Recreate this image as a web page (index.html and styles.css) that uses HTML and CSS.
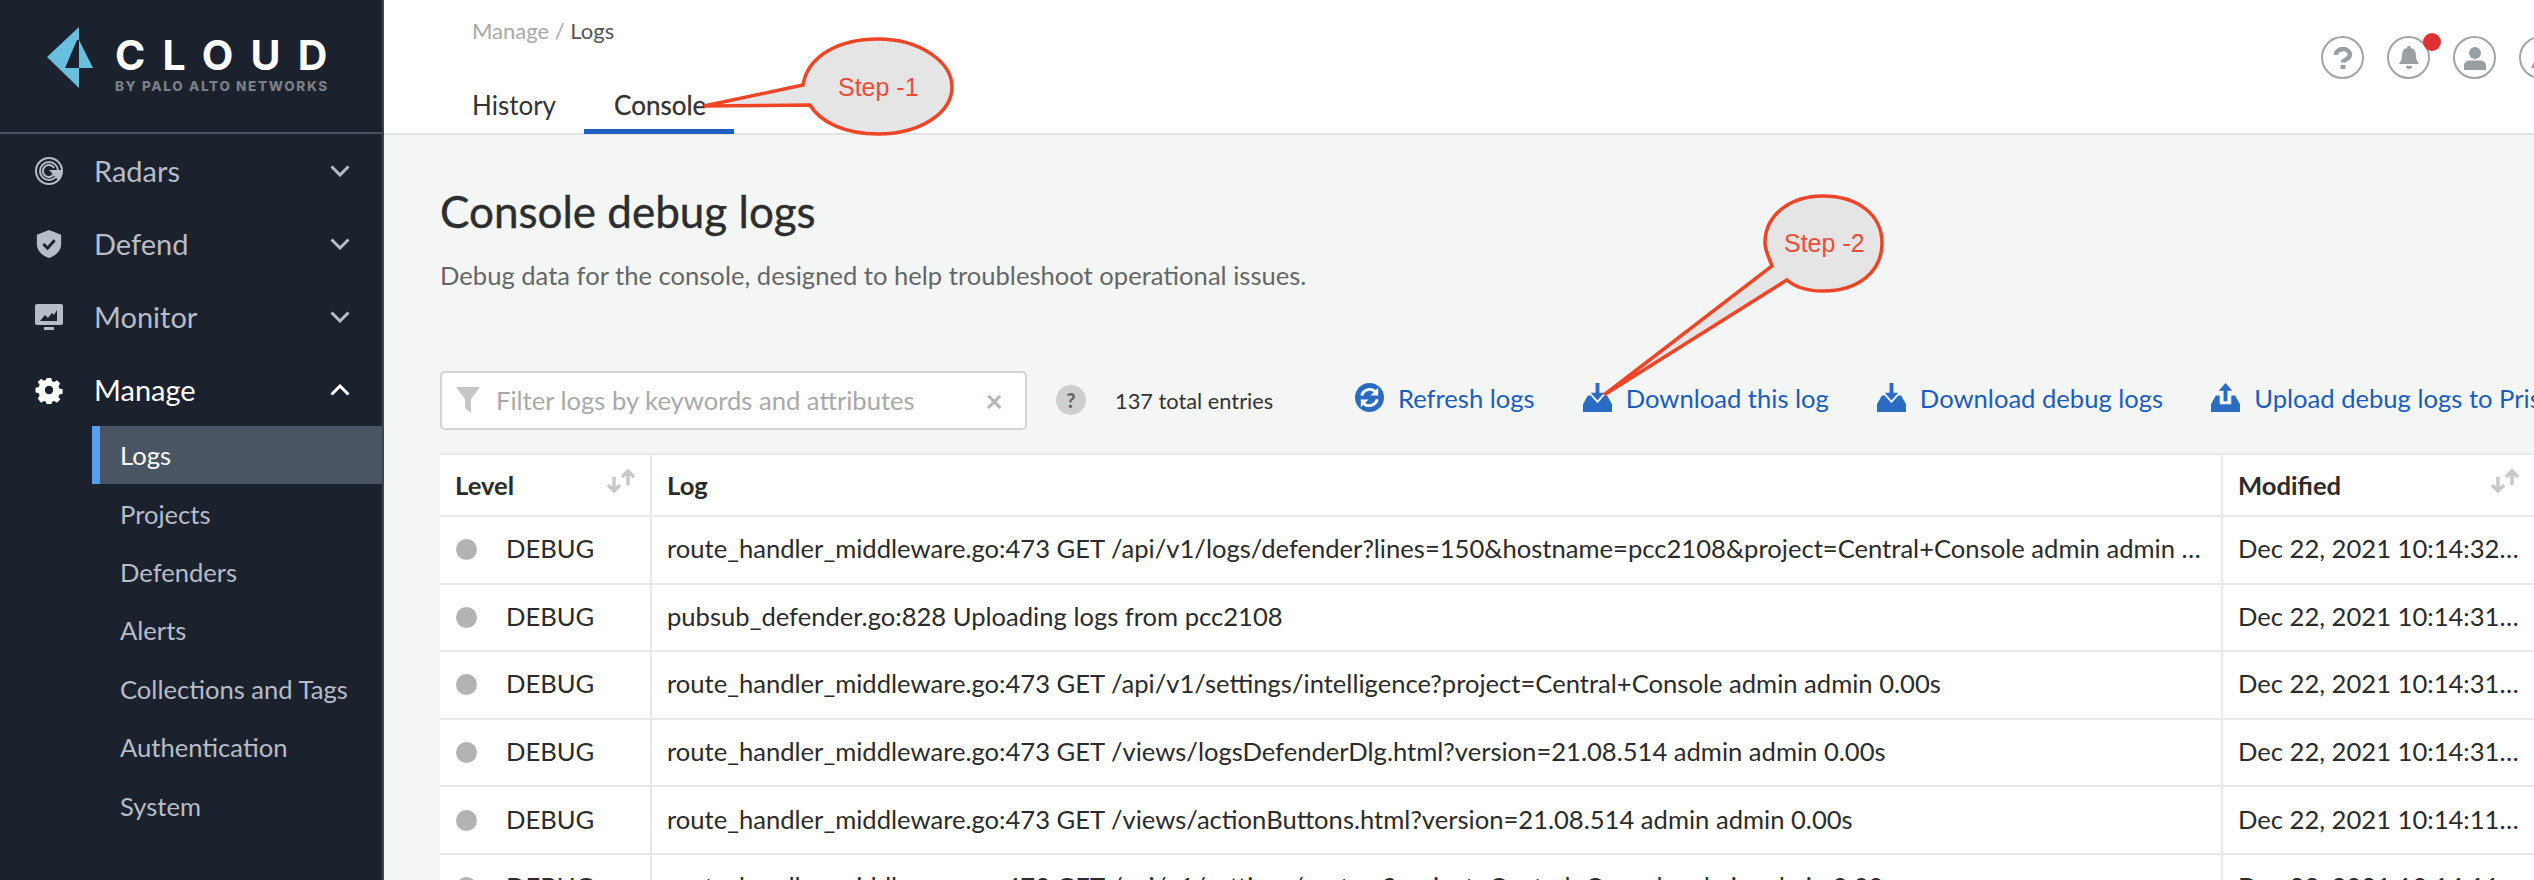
FILE: index.html
```html
<!DOCTYPE html>
<html lang="en">
<head>
<meta charset="utf-8">
<title>Console debug logs</title>
<link rel="stylesheet" href="styles.css">
</head>
<body>
<div class="app">
  <aside class="sidebar">
    <div class="brand">
      <svg class="brand-mark" viewBox="0 0 46 62" width="46" height="62">
        <path fill="#69c0de" d="M32 0V61L0 30Z"/>
        <path fill="#69c0de" d="M32 13L46 41H32Z"/>
        <path fill="#1b212d" d="M30 13L32 13V41H18Z"/>
      </svg>
      <div class="brand-text">
        <div class="brand-name">CLOUD</div>
        <div class="brand-sub">BY PALO ALTO NETWORKS</div>
      </div>
    </div>
    <nav class="nav">
      <div class="nav-item">
        <svg class="nav-icon" viewBox="0 0 28 28"><g fill="none" stroke="#b6bcc8" stroke-width="2"><circle cx="14" cy="14" r="13"/><circle cx="14" cy="14" r="9"/><path d="M19 11a6 6 0 1 0 0 6"/></g><path fill="#b6bcc8" d="M14 13h13a13 13 0 0 1-4 10z"/></svg>
        <span class="nav-label">Radars</span>
        <svg class="nav-chev" viewBox="0 0 20 12"><path d="M1.500 1.500L10 10l8.500-8.500"/></svg>
      </div>
      <div class="nav-item">
        <svg class="nav-icon" viewBox="0 0 28 30"><path fill="#b6bcc8" d="M14 0l13 5v10c0 7-5 12-13 15C6 27 1 22 1 15V5z"/><path fill="none" stroke="#1b212d" stroke-width="3" d="M8 15l4.500 4.500L20 11"/></svg>
        <span class="nav-label">Defend</span>
        <svg class="nav-chev" viewBox="0 0 20 12"><path d="M1.500 1.500L10 10l8.500-8.500"/></svg>
      </div>
      <div class="nav-item">
        <svg class="nav-icon" viewBox="0 0 28 26"><path fill="#b6bcc8" d="M2 0h24a2 2 0 0 1 2 2v17a2 2 0 0 1-2 2H2a2 2 0 0 1-2-2V2a2 2 0 0 1 2-2z"/><path fill="#b6bcc8" d="M9 23h10v3H9z"/><path fill="#1b212d" d="M5 17l5-6 3 3 4-5 2 2 3-5v11z"/></svg>
        <span class="nav-label">Monitor</span>
        <svg class="nav-chev" viewBox="0 0 20 12"><path d="M1.500 1.500L10 10l8.500-8.500"/></svg>
      </div>
      <div class="nav-item nav-item-open">
        <svg class="nav-icon" viewBox="0 0 28 28"><path fill="#fff" fill-rule="evenodd" d="M11.500 1h5l.7 3.500 2.400 1 3-2 3.500 3.500-2 3 1 2.400 3.500.7v5l-3.500.7-1 2.400 2 3-3.500 3.500-3-2-2.400 1-.7 3.500h-5l-.7-3.500-2.400-1-3 2L1.900 23l2-3-1-2.400L-.5 16.500v-5L2.900 10.800l1-2.400-2-3L5.400 2l3 2 2.400-1zM14 9.500a4.500 4.500 0 1 0 0 9 4.500 4.500 0 0 0 0-9z" transform="translate(1 1) scale(.93)"/></svg>
        <span class="nav-label">Manage</span>
        <svg class="nav-chev" viewBox="0 0 20 12"><path d="M1.500 10.500L10 2l8.500 8.500"/></svg>
      </div>
      <ul class="subnav">
        <li class="subnav-item subnav-active">Logs</li>
        <li class="subnav-item">Projects</li>
        <li class="subnav-item">Defenders</li>
        <li class="subnav-item">Alerts</li>
        <li class="subnav-item">Collections and Tags</li>
        <li class="subnav-item">Authentication</li>
        <li class="subnav-item">System</li>
      </ul>
    </nav>
  </aside>

  <main class="main">
    <div class="collapse-tab"><svg viewBox="0 0 10 14" width="10" height="14"><path d="M8 1L2 7l6 6" fill="none" stroke="#fff" stroke-width="2"/></svg></div>
    <header class="topbar">
      <div class="crumbs"><span class="crumb-muted">Manage /</span> <span class="crumb-current">Logs</span></div>
      <div class="tabs">
        <div class="tab">History</div>
        <div class="tab tab-active">Console</div>
      </div>
      <div class="top-icons">
        <span class="top-icon"><svg viewBox="0 0 24 24" width="22" height="22"><path fill="none" stroke="#999ea3" stroke-width="5" d="M4.500 8.500a7.500 6 0 1 1 11 5c-2 1.200-3.500 1.500-3.500 3.500"/><path fill="#999ea3" d="M9.300 19.500h5.400V24H9.300z"/></svg></span>
        <span class="top-icon"><svg viewBox="0 0 24 24" width="24" height="24"><path fill="#999ea3" d="M12 0c1.200 0 2 .8 2 2 4 1 5 4 5 8 0 4 2 6 3 8H2c1-2 3-4 3-8 0-4 1-7 5-8 0-1.200.8-2 2-2zM9 20h6a3 3 0 0 1-6 0z"/></svg><span class="top-badge"></span></span>
        <span class="top-icon"><svg viewBox="0 0 24 24" width="24" height="24"><circle cx="12" cy="7" r="6" fill="#999ea3"/><path fill="#999ea3" d="M1 24v-4c0-4 3-5.500 6-5.500h10c3 0 6 1.500 6 5.500v4z"/></svg></span>
        <span class="top-icon"><svg viewBox="0 0 24 24" width="24" height="24"><path fill="#999ea3" d="M12 2l10 20H2z"/></svg></span>
      </div>
    </header>

    <section class="content">
      <h1 class="title">Console debug logs</h1>
      <p class="subtitle">Debug data for the console, designed to help troubleshoot operational issues.</p>
      <div class="toolbar">
        <div class="filter">
          <svg class="filter-icon" viewBox="0 0 24 26" width="24" height="26"><path fill="#c6c6c6" d="M0 0h24L15 12v14l-6-5V12z"/></svg>
          <span class="filter-text">Filter logs by keywords and attributes</span>
          <span class="filter-clear">&#215;</span>
        </div>
        <span class="help-dot">?</span>
        <span class="count">137 total entries</span>
        <a class="action action-refresh">
          <svg class="action-icon" viewBox="0 0 30 30"><circle cx="15" cy="15" r="15" fill="#2a6cc4"/><path fill="none" stroke="#fff" stroke-width="3" d="M7 13a8.500 8.500 0 0 1 15-3M23 17a8.500 8.500 0 0 1-15 3"/><path fill="#fff" d="M24 5v8h-8zM6 25v-8h8z"/></svg>
          Refresh logs
        </a>
        <a class="action">
          <svg class="action-icon" viewBox="0 0 30 30"><path fill="#2a6cc4" d="M13 0h4v10h5l-7 8-7-8h5z"/><path fill="#2a6cc4" d="M5 13h3l7 8 7-8h3l5 9v8H0v-8z"/></svg>
          Download this log
        </a>
        <a class="action">
          <svg class="action-icon" viewBox="0 0 30 30"><path fill="#2a6cc4" d="M13 0h4v10h5l-7 8-7-8h5z"/><path fill="#2a6cc4" d="M5 13h3l7 8 7-8h3l5 9v8H0v-8z"/></svg>
          Download debug logs
        </a>
        <a class="action">
          <svg class="action-icon" viewBox="0 0 30 30"><path fill="#2a6cc4" d="M15 0l7 8h-5v11h-4V8H8z"/><path fill="#2a6cc4" d="M5 13h4v9h12v-9h4l5 9v8H0v-8z"/></svg>
          Upload debug logs to Prisma Cloud
        </a>
      </div>

      <div class="table">
        <div class="cell head">Level<svg class="sort" viewBox="0 0 32 24" width="32" height="24"><path fill="none" stroke="#c8c8c8" stroke-width="3.500" d="M9 8v14M3 16l6 6 6-6M23 16V2M17 8l6-6 6 6"/></svg></div>
        <div class="cell head">Log</div>
        <div class="cell head">Modified<svg class="sort" viewBox="0 0 32 24" width="32" height="24"><path fill="none" stroke="#c8c8c8" stroke-width="3.500" d="M9 8v14M3 16l6 6 6-6M23 16V2M17 8l6-6 6 6"/></svg></div>

        <div class="cell level"><i class="dot"></i>DEBUG</div>
        <div class="cell"><span class="clip">route_handler_middleware.go:473 GET /api/v1/logs/defender?lines=150&amp;hostname=pcc2108&amp;project=Central+Console admin admin 0.00s</span></div>
        <div class="cell"><span class="clip">Dec 22, 2021 10:14:32 AM</span></div>

        <div class="cell level"><i class="dot"></i>DEBUG</div>
        <div class="cell"><span class="clip">pubsub_defender.go:828 Uploading logs from pcc2108</span></div>
        <div class="cell"><span class="clip">Dec 22, 2021 10:14:31 AM</span></div>

        <div class="cell level"><i class="dot"></i>DEBUG</div>
        <div class="cell"><span class="clip">route_handler_middleware.go:473 GET /api/v1/settings/intelligence?project=Central+Console admin admin 0.00s</span></div>
        <div class="cell"><span class="clip">Dec 22, 2021 10:14:31 AM</span></div>

        <div class="cell level"><i class="dot"></i>DEBUG</div>
        <div class="cell"><span class="clip">route_handler_middleware.go:473 GET /views/logsDefenderDlg.html?version=21.08.514 admin admin 0.00s</span></div>
        <div class="cell"><span class="clip">Dec 22, 2021 10:14:31 AM</span></div>

        <div class="cell level"><i class="dot"></i>DEBUG</div>
        <div class="cell"><span class="clip">route_handler_middleware.go:473 GET /views/actionButtons.html?version=21.08.514 admin admin 0.00s</span></div>
        <div class="cell"><span class="clip">Dec 22, 2021 10:14:11 AM</span></div>

        <div class="cell level"><i class="dot"></i>DEBUG</div>
        <div class="cell"><span class="clip">route_handler_middleware.go:473 GET /api/v1/settings/custom?project=Central+Console admin admin 0.00s</span></div>
        <div class="cell"><span class="clip">Dec 22, 2021 10:14:11 AM</span></div>
      </div>
    </section>

    <svg class="callouts" viewBox="0 0 2534 880" width="2534" height="880">
      <path class="callout" d="M704 106L803 85C808 55 840 39 878 39C920 39 952 62 952 87C952 113 920 134 878 134C845 134 820 122 810 105Z"/>
      <text class="callout-text" x="838" y="96">Step -1</text>
      <path class="callout" d="M1604 395L1772 266C1768 255 1765 250 1765 243C1765 215 1790 196 1823 196C1858 196 1882 215 1882 243C1882 272 1858 291 1823 291C1807 291 1795 287 1787 280Z"/>
      <text class="callout-text" x="1784" y="252">Step -2</text>
    </svg>
  </main>
</div>
</body>
</html>
```

FILE: styles.css
```css
* { box-sizing: border-box; }
html, body { margin: 0; height: 100%; overflow: hidden; }
body { font-family: Lato, "Open Sans", sans-serif; color: #2b2b2b; background: #f4f6f5; }

.app { display: flex; width: 2534px; height: 880px; overflow: hidden; }

.sidebar { width: 384px; flex: none; height: 880px; background: #1b212d; border-right: 2px solid #3f444d; }
.brand { height: 134px; display: flex; align-items: flex-start; padding: 27px 0 0 47px; border-bottom: 2px solid #4a5260; gap: 22px; }
.brand-mark { flex: none; }
.brand-text { padding-top: 9px; }
.brand-name { font-family: Inter, Roboto, sans-serif; font-weight: 700; font-size: 41px; line-height: 38px; letter-spacing: 17.200px; color: #fff; white-space: nowrap; }
.brand-sub { font-family: Inter, Roboto, sans-serif; font-weight: 800; font-size: 13.500px; line-height: 14px; letter-spacing: 1.650px; color: #7b7e84; margin-top: 5px; white-space: nowrap; }

.nav { padding-top: 0; }
.nav-item { display: flex; align-items: center; height: 73px; padding-left: 35px; padding-right: 32px; color: #b6bcc8; font-size: 29px; }
.nav-item-open { color: #fff; }
.nav-icon { width: 28px; height: 28px; flex: none; }
.nav-label { margin-left: 31px; flex: 1; }
.nav-chev { width: 20px; height: 12px; flex: none; fill: none; stroke: #b6bcc8; stroke-width: 3; }
.nav-item-open .nav-chev { stroke: #fff; }

.subnav { list-style: none; margin: 0; padding: 0 0 0 92px; }
.subnav-item { height: 58.400px; display: flex; align-items: center; padding-left: 28px; color: #b6bcc8; font-size: 25.600px; }
.subnav-active { color: #fff; background: #4a5563; border-left: 8px solid #55a0f2; padding-left: 20px; }

.main { position: relative; flex: 1; min-width: 0; height: 880px; overflow: hidden; }
.collapse-tab { position: absolute; left: 0; top: 0; width: 24px; height: 22px; background: #5aa3ee; border-radius: 0 0 5px 0; display: flex; align-items: center; justify-content: center; }

.topbar { position: relative; height: 135px; background: #fff; border-bottom: 2px solid #e2e4e4; }
.crumbs { position: absolute; top: 19px; left: 88px; font-size: 22px; line-height: 24px; }
.crumb-muted { color: #a9a9a9; }
.crumb-current { color: #555; }
.tabs { position: absolute; left: 88px; top: 0; height: 134px; display: flex; }
.tab { color: #333; font-size: 26px; height: 134px; padding-top: 89px; margin-right: 58px; }
.tab-active { position: relative; -webkit-text-stroke: .3px #333; }
.tab-active::after { content: ""; position: absolute; left: -30px; right: -28px; bottom: 0; height: 5px; background: #1f5fc2; }

.top-icons { position: absolute; left: 1937px; top: 36px; display: flex; gap: 23px; }
.top-icon { position: relative; flex: none; width: 43px; height: 43px; border: 2px solid #a0a5aa; border-radius: 50%; display: flex; align-items: center; justify-content: center; background: #fff; }
.top-badge { position: absolute; right: -13px; top: -5px; width: 18px; height: 18px; border-radius: 50%; background: #de3232; }

.content { padding: 0 0 0 56px; }
.title { margin: 50px 0 0; font-size: 44px; line-height: 52px; font-weight: 400; color: #2d2d2d; -webkit-text-stroke: .4px #2d2d2d; }
.subtitle { margin: 23px 0 0; font-size: 25.600px; line-height: 30px; color: #666; }

.toolbar { display: flex; align-items: center; height: 60px; margin-top: 80px; white-space: nowrap; }
.filter { display: flex; align-items: center; width: 587px; height: 59px; background: #fff; border: 2px solid #d4d4d4; border-radius: 5px; padding-left: 14px; flex: none; }
.filter-icon { flex: none; }
.filter-text { margin-left: 16px; font-size: 25.600px; color: #a9a9a9; flex: 1; }
.filter-clear { color: #b5b5b5; font-size: 30px; font-weight: 700; margin-right: 22px; line-height: 24px; }
.help-dot { flex: none; width: 30px; height: 30px; border-radius: 50%; background: #cfcfcf; color: #666; display: flex; align-items: center; justify-content: center; font-size: 20px; font-weight: 900; margin-left: 29px; }
.count { font-size: 21.800px; margin-left: 29px; color: #333; width: 240px; flex: none; }
.action { display: flex; align-items: center; color: #1a5dbd; font-size: 25.600px; margin: 0 48px 5px 0; flex: none; }
.action-icon { width: 29px; height: 29px; margin-right: 14px; flex: none; }

.table { display: grid; grid-template-columns: 212px 1571px 313px; grid-template-rows: 62px; grid-auto-rows: 67.600px; margin-top: 23px; background: #fff; border-top: 2px solid #e8e8e8; width: 2096px; }
.cell { display: flex; align-items: center; padding: 0 14px 3px 15px; font-size: 25.600px; color: #2b2b2b; border-bottom: 2px solid #e9e9e9; border-right: 2px solid #e9e9e9; min-width: 0; white-space: nowrap; }
.head { font-weight: 700; position: relative; padding-bottom: 0; }
.sort { position: absolute; right: 13px; top: 14px; }
.level { padding-left: 16px; }
.dot { width: 21px; height: 21px; border-radius: 50%; background: #b3b3b3; margin: 3px 29px 0 0; flex: none; }
.clip { overflow: hidden; text-overflow: ellipsis; }

.callouts { position: absolute; left: -384px; top: 0; pointer-events: none; }
.callout { fill: #e5e5e5; stroke: #ee4527; stroke-width: 3.500; stroke-linejoin: miter; }
.callout-text { font-family: "Liberation Sans", Arial, sans-serif; font-size: 25px; fill: #ee4c38; }
```
